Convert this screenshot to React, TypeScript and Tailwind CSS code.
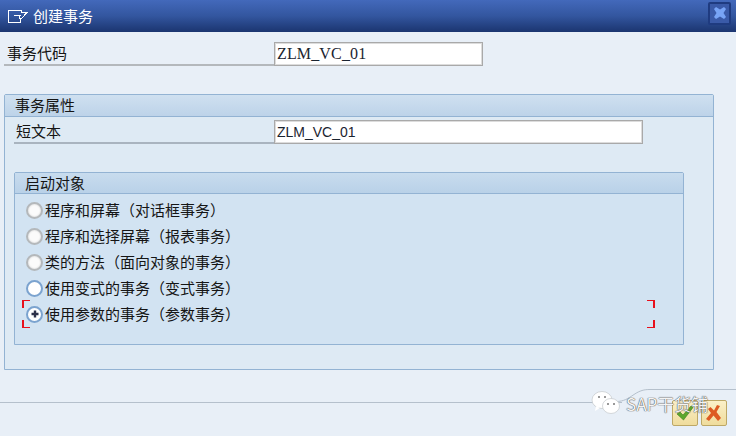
const font = { fontFamily: '"Noto Sans CJK SC", "Liberation Sans", sans-serif' };

function Radio({ label, variant = "plain", marks = false }: { label: string; variant?: "plain" | "focus" | "checked"; marks?: boolean }) {
  const ring =
    variant === "plain"
      ? "border-[#b4b8bb] bg-[#fbfbfb] shadow-[inset_0_0_2px_#c9c9c9]"
      : "border-[#7ba3cf] bg-white";
  return (
    <div className="flex h-[26px] items-center">
      <div className="relative ml-[11px] mr-[2px] flex h-[17px] w-[17px] shrink-0">
        {marks && (
          <>
            <span className="absolute left-[-4px] top-[-6px] h-2 w-2 border-l-2 border-t border-[#e8101c]" />
            <span className="absolute bottom-[-5px] left-[-4px] h-2 w-2 border-b border-l-2 border-[#e8101c]" />
          </>
        )}
        <div className={`flex h-[17px] w-[17px] items-center justify-center rounded-full border-2 ${ring}`}>
          {variant === "checked" && (
            <svg width="8" height="8" viewBox="0 0 8 8">
              <path d="M2.8 0.5h2.4v2.3h2.3v2.4H5.2v2.3H2.8V5.200H.5V2.800h2.300z" fill="#2c3048" />
            </svg>
          )}
        </div>
      </div>
      <span className="whitespace-nowrap text-[15px] text-[#151515]">{label}</span>
    </div>
  );
}

function Field({ value, wide }: { value: string; wide?: boolean }) {
  return (
    <div
      className={`box-border flex h-6 items-center border border-[#a9a9a9] bg-white pl-[2px] text-[#1a2430] shadow-[inset_0_0_0_1px_#dcdcdc] ${
        wide ? "w-[369px] font-['Liberation_Sans'] text-[14px]" : "w-[209px] font-['Liberation_Serif'] text-[16px] tracking-[0.15px]"
      }`}
    >
      {value}
    </div>
  );
}

export default function App() {
  return (
    <div style={font} className="relative flex h-[436px] w-[736px] flex-col overflow-hidden bg-[#e8eff7]">
      <header className="flex h-8 shrink-0 items-center bg-gradient-to-b from-[#4369bb] via-[#33569f] to-[#1b3570] pl-2 pr-[5px] text-white">
        <svg width="20" height="14" viewBox="0 0 20 14" className="mr-[5px]" shapeRendering="crispEdges">
          <path d="M12.500 10v3H.5V1h12.500v2M6 6.500h6.500M13 3.500h6L13 10l-2-1 0-2.500" fill="none" stroke="#fff" strokeWidth="1" />
        </svg>
        <span className="text-[15px]">创建事务</span>
        <div className="mb-[6px] ml-auto flex h-[23px] w-[23px] items-center justify-center rounded-[2px] border-2 border-[#1f3b80] bg-[#3a5aa8]">
          <svg width="12" height="12" viewBox="0 0 12 12">
            <path d="M0 2 2 0 6 2.500 10 0 12 2 9.500 6 12 10 10 12 6 9.500 2 12 0 10 2.500 6z" fill="#78a4f6" />
          </svg>
        </div>
      </header>

      <div className="flex h-[34px] items-end pl-1 pt-[10px]">
        <div className="flex h-6 w-[270px] items-center border-b-2 border-[#b4b8bc] pl-[3px] text-[15px] text-[#151515]">
          事务代码
        </div>
        <Field value="ZLM_VC_01" />
      </div>

      <section className="mx-1 mt-[28px] box-border h-[276px] w-[710px] rounded-t-[2px] border border-[#93b3d3] bg-[#deeaf4]">
        <div className="flex h-[22px] items-center border-b border-[#93b3d3] bg-gradient-to-b from-[#cfe0f0] to-[#bdd3e9] pl-[10px] text-[15px] text-[#151515]">
          事务属性
        </div>
        <div className="flex items-end pl-[9px] pt-[3px]">
          <div className="flex h-6 w-[260px] items-center border-b-2 border-[#a9b4bf] pl-[2px] text-[15px] text-[#151515]">
            短文本
          </div>
          <Field value="ZLM_VC_01" wide />
        </div>

        <div className="ml-[9px] mt-[28px] box-border h-[173px] w-[670px] rounded-t-[2px] border border-[#93b3d3] bg-[#d2e3f2]">
          <div className="flex h-[21px] items-center border-b border-[#93b3d3] bg-gradient-to-b from-[#c8dcee] to-[#b9d1e8] pl-[10px] text-[15px] text-[#151515]">
            启动对象
          </div>
          <div className="relative pt-[3px]">
            <Radio label="程序和屏幕（对话框事务）" />
            <Radio label="程序和选择屏幕（报表事务）" />
            <Radio label="类的方法（面向对象的事务）" />
            <Radio label="使用变式的事务（变式事务）" variant="focus" />
            <Radio label="使用参数的事务（参数事务）" variant="checked" marks />
            <span className="absolute left-[632px] top-[106px] h-2 w-2 border-r-2 border-t border-[#e8101c]" />
            <span className="absolute left-[632px] top-[126px] h-2 w-2 border-b border-r-2 border-[#e8101c]" />
          </div>
        </div>
      </section>

      <footer className="mt-[32px] w-[622px] flex-1 border-t border-[#b5c0cc]" />

      <svg className="absolute left-[616px] top-[385px]" width="120" height="20" viewBox="0 0 120 20">
        <path d="M0 16.500c8 0 12-3 18-7 6-4 10-5 16-5H120" fill="none" stroke="#b5c0cc" />
      </svg>

      <div className="absolute right-[9px] top-[400px] flex gap-[3px]">
        <div className="flex h-[26px] w-[26px] items-center justify-center rounded-[2px] border border-[#bda866] bg-gradient-to-b from-[#fbf0c8] to-[#efdc9c]">
          <svg width="18" height="16" viewBox="0 0 18 16">
            <path d="M1 9l3-2 3 3 8-9 2 1.500L7.500 15z" fill="#5da72c" stroke="#3c7d1c" strokeWidth=".6" />
          </svg>
        </div>
        <div className="flex h-[26px] w-[26px] items-center justify-center rounded-[2px] border border-[#bda866] bg-gradient-to-b from-[#fbf0c8] to-[#efdc9c]">
          <svg width="18" height="18" viewBox="0 0 18 18">
            <path d="M12 1l3 1-3.500 6L16 14l-3 3-4.500-5.500L4 17l-3-2 5-6L3 5l2.500-2 3.500 3.500z" fill="#dd5a22" />
          </svg>
        </div>
      </div>

      <svg className="absolute left-[591px] top-[390px]" width="29" height="26" viewBox="0 0 29 26">
        <ellipse cx="11" cy="10" rx="10" ry="8.500" fill="#fff" stroke="#c4c8cc" strokeWidth=".7" />
        <path d="M5 16l-1 5 5-3z" fill="#fff" />
        <ellipse cx="20" cy="16" rx="8.500" ry="7.500" fill="#fff" stroke="#c4c8cc" strokeWidth=".7" />
        <circle cx="8" cy="7" r="1" fill="#777" />
        <circle cx="14" cy="7" r="1" fill="#777" />
        <circle cx="17" cy="14" r="1" fill="#777" />
        <circle cx="23" cy="14" r="1" fill="#777" />
      </svg>
      <span className="absolute left-[626px] top-[391px] whitespace-nowrap text-[17px] text-[#f4f4f4] [text-shadow:0_0_1px_#444,0_0_1px_#444]">
        SAP干货铺
      </span>
    </div>
  );
}
